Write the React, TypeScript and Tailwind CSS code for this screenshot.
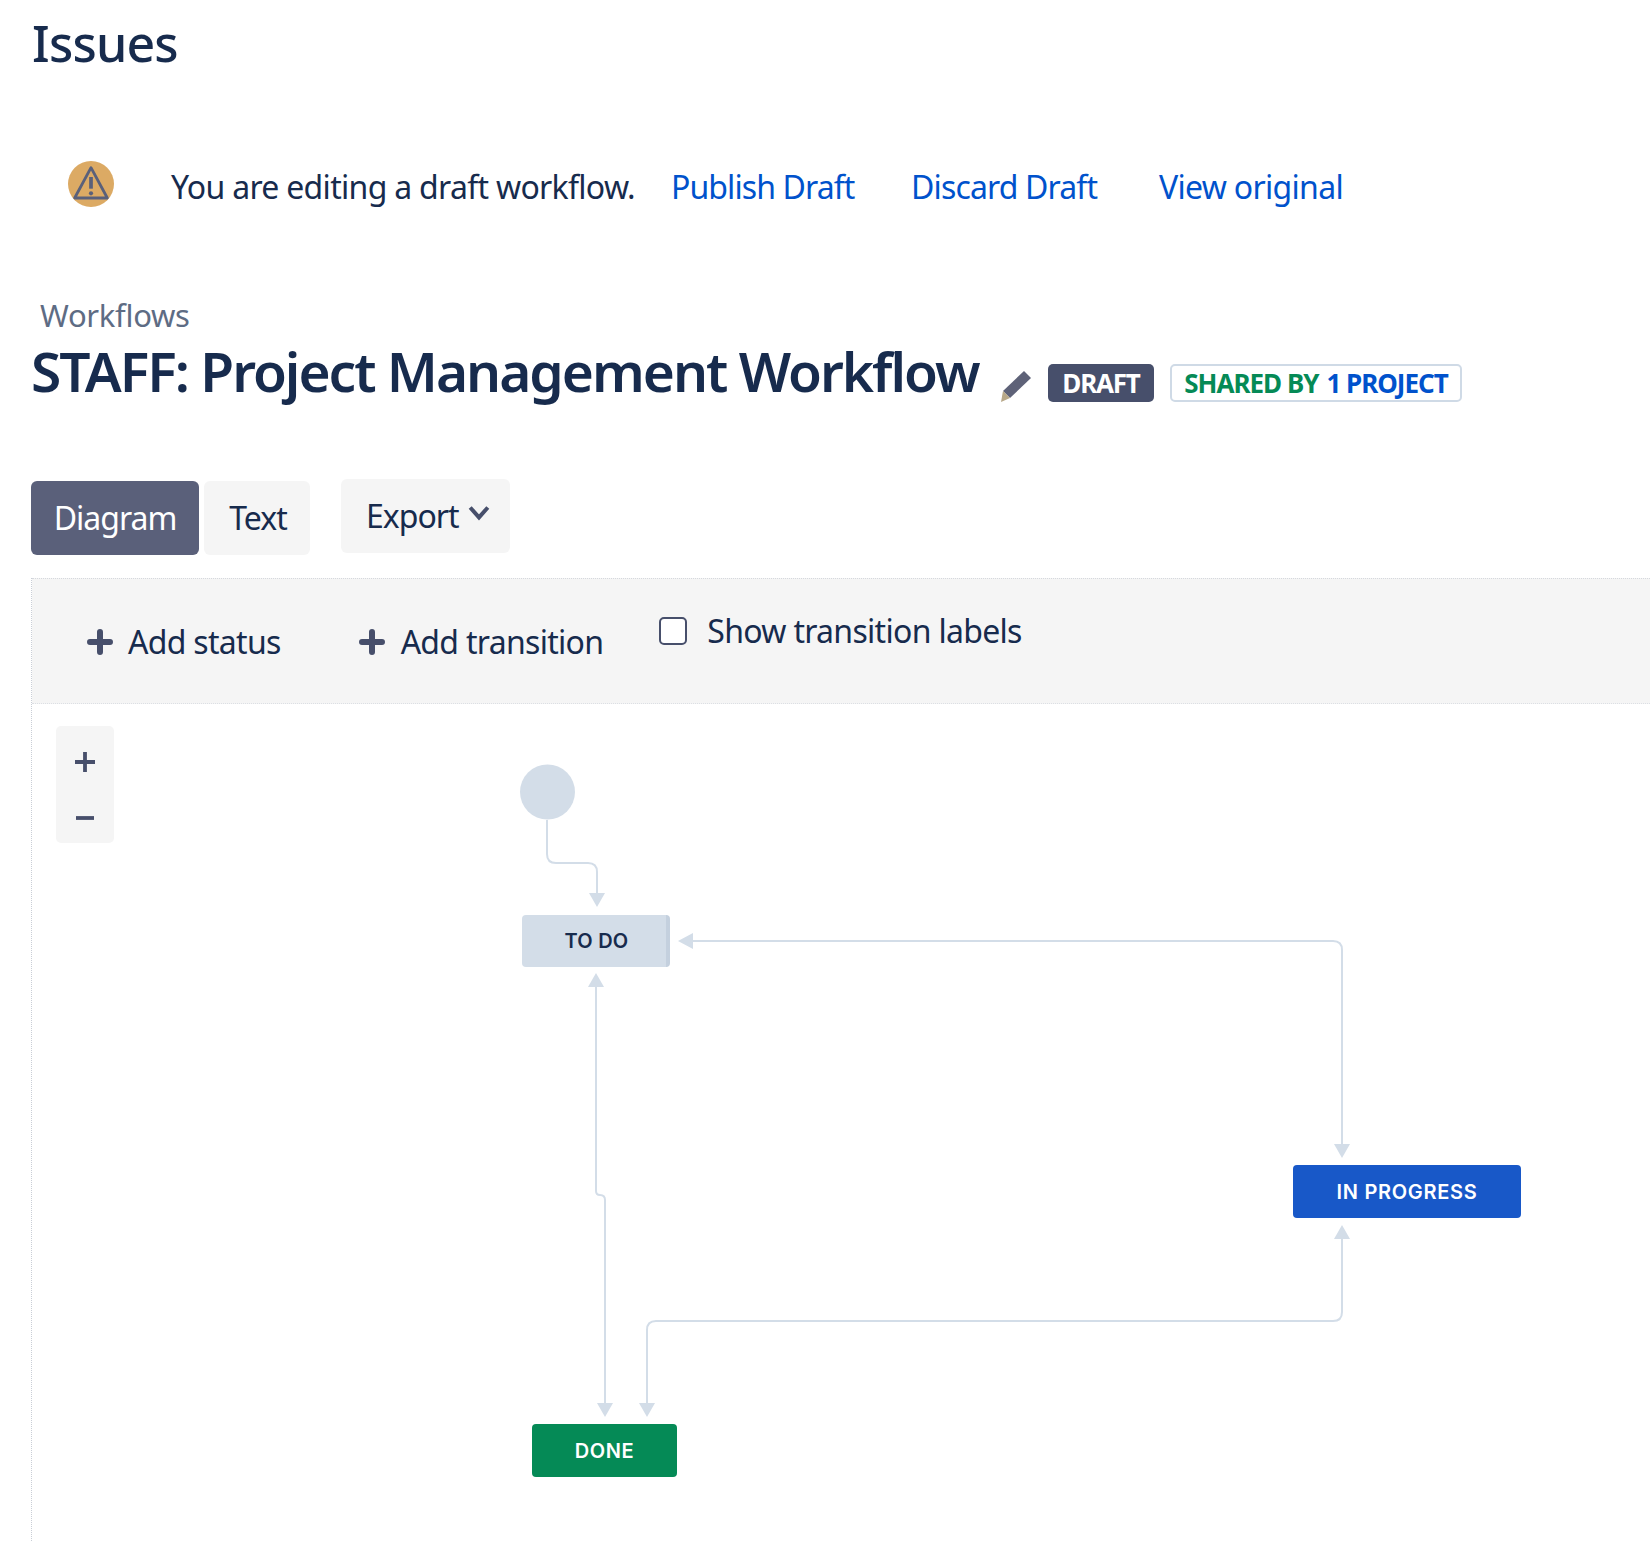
const Plus = ({ className }: { className: string }) => (
  <svg viewBox="0 0 26 26" className={className}>
    <path d="M13 3v20M3 13h20" stroke="#474f6b" strokeWidth="6" strokeLinecap="round" fill="none" />
  </svg>
);

const Arrow = ({ x, y, dir }: { x: number; y: number; dir: "down" | "up" | "left" }) => {
  const points =
    dir === "down"
      ? `${x},${y} ${x - 8},${y - 14} ${x + 8},${y - 14}`
      : dir === "up"
        ? `${x},${y} ${x - 8},${y + 14} ${x + 8},${y + 14}`
        : `${x},${y} ${x + 15},${y - 8} ${x + 15},${y + 8}`;
  return <polygon points={points} fill="#d3dde8" />;
};

const App = () => {
  return (
    <div className="relative w-[1650px] h-[1541px] overflow-hidden bg-white text-[#172b4d] font-['Noto_Sans','Open_Sans',sans-serif]">
      <h1 className="pl-8 pt-[6px] h-[82px] text-[50px] leading-[74px] font-medium tracking-[-0.8px]">Issues</h1>

      <div className="flex items-center h-[46px] mt-[79px] pl-[68px]">
        <div className="flex items-center justify-center w-[46px] h-[46px] rounded-full bg-[#dcaa64]">
          <svg viewBox="0 0 36 36" className="w-[42px] h-[42px]" fill="none">
            <path d="M18 4 L32 30 H4 Z" stroke="#5a607a" strokeWidth="2.4" strokeLinejoin="round" />
            <path d="M18 12v10" stroke="#5a607a" strokeWidth="3.2" />
            <circle cx="18" cy="26" r="1.8" fill="#5a607a" />
          </svg>
        </div>
        <span className="ml-[57px] mt-[6px] text-[32px] leading-[46px] tracking-[-0.7px] w-[500px] whitespace-nowrap">You are editing a draft workflow.</span>
        <a className="mt-[6px] text-[32px] leading-[46px] tracking-[-0.9px] text-[#0052cc] w-[240px] whitespace-nowrap">Publish Draft</a>
        <a className="mt-[6px] text-[32px] leading-[46px] tracking-[-0.85px] text-[#0052cc] w-[248px] whitespace-nowrap">Discard Draft</a>
        <a className="mt-[6px] text-[32px] leading-[46px] tracking-[-0.7px] text-[#0052cc] whitespace-nowrap">View original</a>
      </div>

      <div className="pl-[40px] mt-[87px] h-[42px] text-[31px] leading-[42px] tracking-[-0.3px] text-[#5e6c84]">Workflows</div>

      <div className="flex items-center pl-[31px] mt-[-4px] h-[78px]">
        <h2 className="text-[55px] leading-[78px] font-semibold tracking-[-2px] whitespace-nowrap w-[969px]">STAFF: Project Management Workflow</h2>
        <svg viewBox="0 0 32 32" className="w-8 h-8 mt-[30px] shrink-0">
          <path d="M24 1 L31 8 L10 28 L3 21 Z" fill="#5e6278" />
          <path d="M3 21 L10 28 L1 32 Z" fill="#b8a888" />
        </svg>
        <span className="flex items-center justify-center ml-4 w-[106px] h-[38px] mt-[24px] rounded-[5px] bg-[#474f6b] text-white text-[26px] font-bold tracking-[-1.2px]">DRAFT</span>
        <span className="flex items-center justify-center ml-[16px] w-[292px] h-[38px] mt-[24px] rounded-[5px] border-2 border-[#cfdae6] text-[26px] font-bold tracking-[-1px] whitespace-nowrap">
          <span className="text-[#058a56]">SHARED BY</span>
          <span className="ml-2 text-[#0052cc]">1 PROJECT</span>
        </span>
      </div>

      <div className="flex items-start pl-[31px] mt-[69px] h-[99px] text-[32px] tracking-[-1px]">
        <div className="flex items-center justify-center w-[168px] h-[74px] mt-[2px] rounded-[6px] bg-[#5a607a] text-white">Diagram</div>
        <div className="flex items-center justify-center w-[106px] h-[74px] mt-[2px] ml-[5px] pl-[2px] rounded-[6px] bg-[#f5f5f5]">Text</div>
        <div className="flex items-center w-[169px] h-[74px] ml-[31px] pl-[25px] rounded-[6px] bg-[#f5f5f5]">
          Export
          <svg viewBox="0 0 20 20" className="w-[22px] h-[22px] ml-[9px] mb-[6px]" fill="none">
            <path d="M2 5 L10 14 L18 5" stroke="#474f6b" strokeWidth="3.6" />
          </svg>
        </div>
      </div>

      <div className="ml-[31px] h-[963px] border-l border-dotted border-[#c9ced6]">
        <div className="flex items-start h-[126px] bg-[#f5f5f5] border-t border-dotted border-t-[#d5d8dd] border-b border-b-[#dcdfe4] text-[32px] tracking-[-0.7px] leading-[46px]">
          <div className="flex items-center mt-[40px] ml-[55px]">
            <Plus className="w-[26px] h-[26px] mr-[15px]" />
            Add status
          </div>
          <div className="flex items-center mt-[40px] ml-[78px]">
            <Plus className="w-[26px] h-[26px] mr-[16px]" />
            Add transition
          </div>
          <div className="flex items-center mt-[29px] ml-[55px]">
            <span className="w-[28px] h-[28px] ml-px mr-[20px] rounded-[5px] border-2 border-[#474f6b] bg-white" />
            Show transition labels
          </div>
        </div>

        <div className="relative h-[838px]">
          <div className="absolute left-[24px] top-[22px] flex flex-col items-center w-[58px] h-[117px] rounded-[5px] bg-[#f5f5f5]">
            <svg viewBox="0 0 24 24" className="w-6 h-6 mt-[24px]">
              <path d="M12 2v20M2 12h20" stroke="#474f6b" strokeWidth="3.8" fill="none" />
            </svg>
            <svg viewBox="0 0 24 24" className="w-6 h-6 mt-[32px]">
              <path d="M3 12h18" stroke="#474f6b" strokeWidth="3.8" fill="none" />
            </svg>
          </div>

          {/* lines use page coordinates shifted by the canvas origin */}
          <svg viewBox="32 704 1619 838" className="absolute left-0 top-0 w-[1619px] h-[838px]" fill="none">
            <circle cx="547.5" cy="792" r="27.5" fill="#d3dde8" />
            <g stroke="#d3dde8" strokeWidth="2">
              <path d="M547 820 V854 Q547 863 556 863 H588 Q597 863 597 872 V895" />
              <path d="M692 941 H1333 Q1342 941 1342 950 V1146" />
              <path d="M1342 1238 V1312 Q1342 1321 1333 1321 H656 Q647 1321 647 1330 V1404" />
              <path d="M596 986 V1191 Q596 1195 600 1195 Q605 1195 605 1200 V1404" />
            </g>
            <Arrow x={597} y={907} dir="down" />
            <Arrow x={1342} y={1158} dir="down" />
            <Arrow x={605} y={1417} dir="down" />
            <Arrow x={647} y={1417} dir="down" />
            <Arrow x={596} y={973} dir="up" />
            <Arrow x={1342} y={1225} dir="up" />
            <Arrow x={678} y={941} dir="left" />
          </svg>

          <div className="absolute left-[490px] top-[211px] flex items-center justify-center w-[148px] h-[52px] pl-[5px] rounded-[4px] bg-[#d3dde8] border-r-[4px] border-r-[#c4d0de] font-['Inter',sans-serif] font-semibold text-[20px] tracking-[0.2px] text-[#172b4d]">TO DO</div>
          <div className="absolute left-[1261px] top-[461px] flex items-center justify-center w-[228px] h-[53px] rounded-[4px] bg-[#1858c8] font-['Inter',sans-serif] font-semibold text-[20px] tracking-[0.7px] text-white">IN PROGRESS</div>
          <div className="absolute left-[500px] top-[720px] flex items-center justify-center w-[145px] h-[53px] rounded-[4px] bg-[#058a56] font-['Inter',sans-serif] font-semibold text-[20px] tracking-[0.6px] text-white">DONE</div>
        </div>
      </div>
    </div>
  );
};

export default App;
